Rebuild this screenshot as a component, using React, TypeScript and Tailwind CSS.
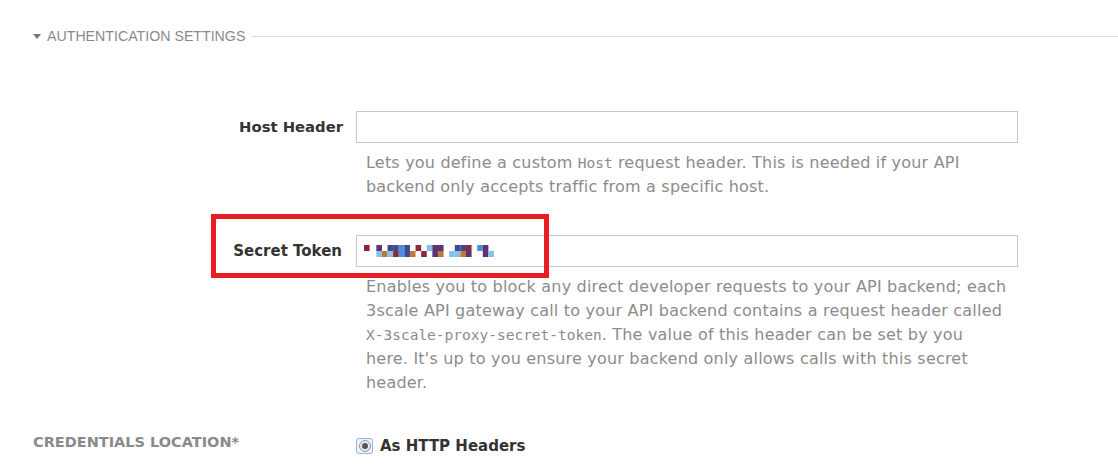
import React from "react";

const C = {
  r: "#8b2a3c",
  p: "#5a3570",
  n: "#3d4a92",
  b: "#4d8fd6",
  l: "#86c1ec",
  o: "#c07838",
};

const cells: [number, number, string][] = [
  [0, 0, C.r],
  [11, 0, C.p],
  [21, 0, C.n],
  [26, 0, C.n],
  [31, 0, C.b],
  [36, 0, C.n],
  [46, 0, C.r],
  [56, 0, C.l],
  [61, 0, C.p],
  [66, 0, C.p],
  [81, 0, C.n],
  [86, 0, C.n],
  [91, 0, C.r],
  [101, 0, C.b],
  [106, 0, C.p],
  [11, 5, C.l],
  [16, 5, C.o],
  [21, 5, C.l],
  [26, 5, C.r],
  [31, 5, C.b],
  [36, 5, C.n],
  [41, 5, C.o],
  [51, 5, C.r],
  [61, 5, C.p],
  [66, 5, C.o],
  [76, 5, C.l],
  [81, 5, C.l],
  [86, 5, C.o],
  [91, 5, C.p],
  [106, 5, C.p],
  [111, 5, C.l],
];

function Token() {
  return (
    <svg width="130" height="12" viewBox="0 0 116 10" preserveAspectRatio="none" className="block">
      {cells.map(([x, y, c], i) => (
        <rect key={i} x={x} y={y} width="5" height="5" fill={c} />
      ))}
    </svg>
  );
}

export default function App() {
  return (
    <div className="relative w-[1118px] h-[473px] overflow-hidden bg-white font-['DejaVu_Sans',Verdana,sans-serif]">
      {/* Section header */}
      <div className="flex items-center pl-[33px] pt-[28px]">
        <svg width="8" height="5" viewBox="0 0 8 5" className="mr-[6px]">
          <path d="M0 0 L8 0 L4 5 Z" fill="#777" />
        </svg>
        <span className="font-['Liberation_Sans',Arial,sans-serif] text-[14.2px] leading-[16px] text-[#8a8a8a]">
          AUTHENTICATION SETTINGS
        </span>
        <div className="ml-[6px] flex-1 h-px bg-[#dddddd]" />
      </div>

      {/* Host Header */}
      <div className="mt-[67px] grid grid-cols-[356px_662px]">
        <div className="flex items-center justify-end pr-[13px] text-[14.8px] font-bold text-[#333]">
          Host Header
        </div>
        <div className="h-[32px] border border-[#c8c8c8] bg-white" />
        <div />
        <p className="mt-[8px] pl-[10px] text-[16px] tracking-[0.2px] leading-[24px] text-[#8c8c8c]">
          Lets you define a custom{" "}
          <code className="font-['DejaVu_Sans_Mono',monospace] text-[14.5px] tracking-normal">Host</code> request header. This is needed if your API
          <br />
          backend only accepts traffic from a specific host.
        </p>
      </div>

      {/* Secret Token */}
      <div className="mt-[36px] grid grid-cols-[356px_662px]">
        <div className="flex items-center justify-end pr-[14px] text-[15px] font-bold text-[#333]">
          Secret Token
        </div>
        <div className="h-[32px] border border-[#c8c8c8] bg-white flex items-center pl-[7px]">
          <Token />
        </div>
        <div />
        <p className="mt-[8px] pl-[10px] text-[16px] tracking-[0.2px] leading-[24px] text-[#8c8c8c]">
          Enables you to block any direct developer requests to your API backend; each
          <br />
          3scale API gateway call to your API backend contains a request header called
          <br />
          <code className="font-['DejaVu_Sans_Mono',monospace] text-[14.5px] tracking-normal">X-3scale-proxy-secret-token</code>. The value of this header can be set by you
          <br />
          here. It's up to you ensure your backend only allows calls with this secret
          <br />
          header.
        </p>
      </div>

      {/* Credentials location */}
      <div className="mt-[42px] flex items-start">
        <div className="w-[356px] -mt-[4px] pl-[33px] text-[14.5px] leading-[18px] font-bold text-[#8a8a8a]">
          CREDENTIALS LOCATION*
        </div>
        <div className="flex items-center h-[18px]">
          <div className="w-[17px] h-[16px] rounded-[3px] border border-[#8fb6f0] flex items-center justify-center bg-[#eef4fd]">
            <div className="w-[12px] h-[12px] rounded-full border border-[#9a9a9a] bg-[#e8e8e8] flex items-center justify-center">
              <div className="w-[6px] h-[6px] rounded-full bg-[#555]" />
            </div>
          </div>
          <span className="ml-[7px] text-[15px] font-bold text-[#333]">As HTTP Headers</span>
        </div>
      </div>

      {/* Red annotation box */}
      <div className="absolute left-[211px] top-[214px] w-[338px] h-[64px] border-[5px] border-[#ec1c24]" />
    </div>
  );
}
